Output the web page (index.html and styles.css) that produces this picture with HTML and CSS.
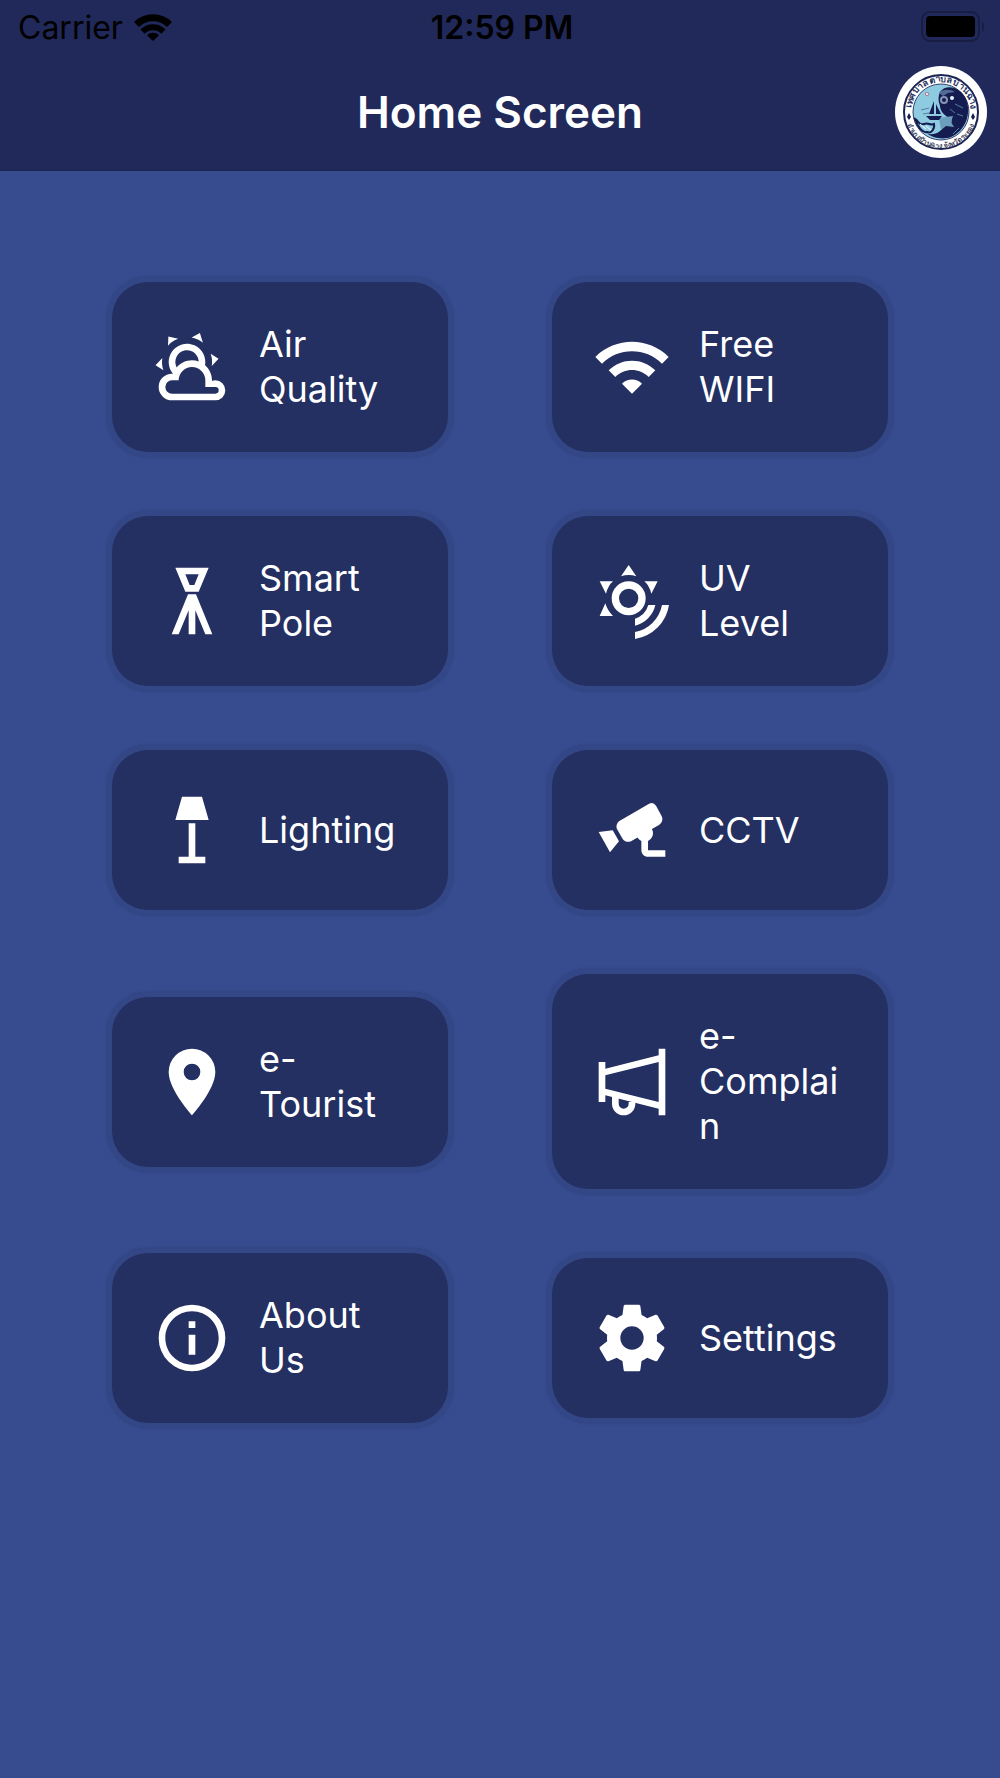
FILE: index.html
```html
<!DOCTYPE html>
<html lang="en">
<head>
  <meta charset="UTF-8" />
  <meta name="viewport" content="width=device-width, initial-scale=1" />
  <title>Home Screen</title>
  <link rel="stylesheet" href="styles.css">
</head>
<body>
  <header class="header">
    <div class="status-bar">
      <div class="carrier">
        <span>Carrier</span>
        <svg class="status-wifi" viewBox="0 0 40 30" aria-hidden="true">
          <path d="M3.5,12.5A23.5,23.5 0 0 1 36.5,12.5" fill="none" stroke="#000" stroke-width="7" />
          <path d="M9.5,19.5A15,15 0 0 1 30.5,19.5" fill="none" stroke="#000" stroke-width="6" />
          <path d="M20,29L14,23.2A8.5,8.5 0 0 1 26,23.2Z" />
        </svg>
      </div>
      <div class="clock">12:59 PM</div>
      <svg class="battery" viewBox="0 0 66 32" aria-hidden="true">
        <rect x="2" y="1" width="57" height="29" rx="8" fill="none" stroke="#171d43" stroke-width="2" />
        <rect x="6" y="5" width="49" height="21" rx="4" />
        <path d="M62,11C65,12 65,20 62,21Z" fill="#171d43" />
      </svg>
    </div>
    <div class="nav-bar">
      <h1 class="title">Home Screen</h1>
      <svg class="logo" viewBox="0 0 92 92" role="img" aria-label="Municipality seal">
        <defs>
          <path id="seal-top" d="M16,46A30,30 0 0 1 76,46" />
          <path id="seal-bottom" d="M10,46A36,36 0 0 0 82,46" />
        </defs>
        <circle cx="46" cy="46" r="46" fill="#fff" />
        <circle cx="46" cy="46" r="37" fill="#fff" stroke="#1b2352" stroke-width="2" />
        <circle cx="46" cy="46" r="28" fill="#8fcbe0" stroke="#35406f" stroke-width="1" />
        <!-- fish -->
        <path d="M45,26C52,17 66,22 71,33C77,48 70,65 56,71C48,74 38,72 33,68C42,69 47,65 49,59C54,62 58,58 56,52C50,51 45,45 45,40C43,35 43,30 45,26Z" fill="#151d50" />
        <path d="M44,52L58,50L56,56L59,61L51,60L46,64Z" fill="#6c9fbd" />
        <circle cx="49" cy="34" r="4" fill="#8795b5" />
        <circle cx="49" cy="34" r="2" fill="#151d50" />
        <circle cx="57" cy="32" r="2" fill="#e8f2f8" />
        <path d="M44,27C47,23 55,23 60,26L53,27L48,30Z" fill="#536b95" />
        <!-- boat and waves -->
        <path d="M39,35V48H34ZM41,38L46,48H41ZM31,50H47L44,54H35Z" fill="#151d50" />
        <path d="M20,53C24,55 24,60 29,58C34,56 35,60 39,58C40,63 36,68 32,66C28,67 23,62 20,53Z" fill="#8fcbe0" stroke="#151d50" stroke-width="2" />
        <path d="M25,58L31,63M31,60L36,64" stroke="#fff" stroke-width="1" />
        <path d="M26,44L34,42M28,48L34,47M58,68L64,62M60,38L68,42M62,48L68,50M55,43L60,47" stroke="#547da0" stroke-width="1" />
        <circle cx="32" cy="28" r="2" fill="#b2788c" />
        <circle cx="32" cy="28" r="1" fill="#fff" />
        <path d="M14,47L12,51L14,54L16,51ZM78,47L76,51L78,54L80,51Z" fill="#151d50" />
        <text class="seal-text"><textPath href="#seal-top" startOffset="50%">เทศบาลตำบลบ้านฉาง</textPath></text>
        <text class="seal-text seal-text-small"><textPath href="#seal-bottom" startOffset="50%">อำเภอบ้านฉาง จังหวัดระยอง</textPath></text>
      </svg>
    </div>
  </header>

  <main class="menu">
    <a class="card" href="#air-quality">
      <svg class="icon" viewBox="0 0 24 24" aria-hidden="true"><path d="M12.74,5.47C15.1,6.5 16.35,9.03 15.92,11.46C17.19,12.56 18,14.19 18,16V16.17C18.31,16.06 18.65,16 19,16A3,3 0 0,1 22,19A3,3 0 0,1 19,22H6A4,4 0 0,1 2,18A4,4 0 0,1 6,14H6.27C5,12.45 4.6,10.24 5.5,8.26C6.72,5.5 9.97,4.24 12.74,5.47M11.93,7.3C10.16,6.5 8.09,7.31 7.31,9.07C6.85,10.09 6.93,11.22 7.41,12.13C8.5,10.83 10.16,10 12,10C12.7,10 13.38,10.12 14,10.34C13.94,9.06 13.18,7.86 11.93,7.3M13.55,3.64C13,3.4 12.45,3.23 11.88,3.12L14.37,1.82L15.27,4.71C14.76,4.29 14.19,3.93 13.55,3.64M6.09,4.44C5.6,4.79 5.17,5.19 4.8,5.63L4.91,2.82L7.87,3.5C7.25,3.71 6.65,4.03 6.09,4.44M18,9.71C17.91,9.12 17.78,8.55 17.59,8L19.97,9.5L17.92,11.73C18.03,11.08 18.05,10.4 18,9.71M3.04,11.3C3.11,11.9 3.24,12.47 3.43,13L1.06,11.5L3.1,9.28C3,9.93 2.97,10.61 3.04,11.3M19,18H16V16A4,4 0 0,0 12,12A4,4 0 0,0 8,16H6A2,2 0 0,0 4,18A2,2 0 0,0 6,20H19A1,1 0 0,0 20,19A1,1 0 0,0 19,18Z" /></svg>
      <span class="label">Air Quality</span>
    </a>
    <a class="card" href="#wifi">
      <svg class="icon" viewBox="0 0 24 24" aria-hidden="true"><path d="M1 9l2 2c4.97-4.97 13.03-4.97 18 0l2-2C16.93 2.93 7.08 2.93 1 9zm8 8l3 3 3-3c-1.65-1.66-4.34-1.66-6 0zm-4-4l2 2c2.76-2.76 7.24-2.76 10 0l2-2C15.14 9.14 8.87 9.14 5 13z" /></svg>
      <span class="label">Free WIFI</span>
    </a>
    <a class="card" href="#smart-pole">
      <svg class="icon" viewBox="0 0 24 24" aria-hidden="true"><path fill-rule="evenodd" d="M7,2H17L14,9.2H10L7,2M10,4L11.3,7.2H12.7L14,4H10M10.8,10H13.2L18.1,22H16L13,14.8V22H11V14.8L8,22H5.9L10.8,10Z" /></svg>
      <span class="label">Smart Pole</span>
    </a>
    <a class="card" href="#uv">
      <svg class="icon" viewBox="0 0 24 24" aria-hidden="true">
        <circle cx="11" cy="11.2" r="4" fill="none" stroke="#fff" stroke-width="2.2" />
        <path d="M11,1.2L13.3,4.6Q11,3.8 8.7,4.6ZM2.3,6.1H6.3Q4.8,7.4 4.2,9.8ZM15.7,6.1H19.7L17.8,9.8Q17.2,7.4 15.7,6.1ZM2.3,16.5L4,12.7Q4.7,15 6.3,16.5ZM16.9,13.2H19A8.2,8.2 0 0 1 12.9,19.4V17.3A6.2,6.2 0 0 0 16.9,13.2ZM21,13.2H23.1A12.2,12.2 0 0 1 12.9,23.4V21.3A10.2,10.2 0 0 0 21,13.2Z" />
      </svg>
      <span class="label">UV Level</span>
    </a>
    <a class="card" href="#lighting">
      <svg class="icon" viewBox="0 0 24 24" aria-hidden="true"><path d="M9,2H15L17,9H7L9,2M11,10H13V20H16V22H8V20H11V10Z" /></svg>
      <span class="label">Lighting</span>
    </a>
    <a class="card" href="#cctv">
      <svg class="icon" viewBox="0 0 24 24" aria-hidden="true"><path d="M18.15,3.94C17.77,3.91 17.37,4 17,4.2L8.35,9.2C7.39,9.76 7.07,11 7.62,11.94L9.12,14.53C9.67,15.5 10.89,15.82 11.85,15.27L13.65,14.23C13.92,14.69 14.32,15.06 14.81,15.27V18.04C14.81,19.13 15.7,20 16.81,20H22V18.04H16.81V15.27C17.72,14.87 18.31,13.97 18.31,13C18.31,12.54 18.19,12.11 17.97,11.73L20.1,10.47C21.07,9.91 21.4,8.7 20.84,7.73L19.34,4.94C19,4.34 18.6,4 18.15,3.94M6.22,12.1L2,12.6L5.4,18.7L8.1,15.4L6.22,12.1Z" /></svg>
      <span class="label">CCTV</span>
    </a>
    <a class="card" href="#tourist">
      <svg class="icon" viewBox="0 0 24 24" aria-hidden="true"><path d="M12,11.5A2.5,2.5 0 0,1 9.5,9A2.5,2.5 0 0,1 12,6.5A2.5,2.5 0 0,1 14.5,9A2.5,2.5 0 0,1 12,11.5M12,2A7,7 0 0,0 5,9C5,14.25 12,22 12,22C12,22 19,14.25 19,9A7,7 0 0,0 12,2Z" /></svg>
      <span class="label">e-Tourist</span>
    </a>
    <a class="card" href="#complain">
      <svg class="icon" viewBox="0 0 24 24" aria-hidden="true">
        <path fill-rule="evenodd" d="M2,6H4V8L20,4V2H22V22H20V20L4,16V18H2ZM20,6L4,10V14L20,18Z" />
        <path d="M7,16.5V18.5A2.5,2.5 0 0 0 12,18.5V18" fill="none" stroke="#fff" stroke-width="2" />
      </svg>
      <span class="label">e-Complain</span>
    </a>
    <a class="card" href="#about">
      <svg class="icon" viewBox="0 0 24 24" aria-hidden="true"><path d="M11,9H13V7H11M12,20C7.59,20 4,16.41 4,12C4,7.59 7.59,4 12,4C16.41,4 20,7.59 20,12C20,16.41 16.41,20 12,20M12,2A10,10 0 0,0 2,12A10,10 0 0,0 12,22A10,10 0 0,0 22,12A10,10 0 0,0 12,2M11,17H13V11H11V17Z" /></svg>
      <span class="label">About Us</span>
    </a>
    <a class="card" href="#settings">
      <svg class="icon" viewBox="0 0 24 24" aria-hidden="true"><path d="M12,15.5A3.5,3.5 0 0,1 8.5,12A3.5,3.5 0 0,1 12,8.5A3.5,3.5 0 0,1 15.5,12A3.5,3.5 0 0,1 12,15.5M19.43,12.97C19.47,12.65 19.5,12.33 19.5,12C19.5,11.67 19.47,11.34 19.43,11L21.54,9.37C21.73,9.22 21.78,8.95 21.66,8.73L19.66,5.27C19.54,5.05 19.27,4.96 19.05,5.05L16.56,6.05C16.04,5.66 15.5,5.32 14.87,5.07L14.5,2.42C14.46,2.18 14.25,2 14,2H10C9.75,2 9.54,2.18 9.5,2.42L9.13,5.07C8.5,5.32 7.96,5.66 7.44,6.05L4.95,5.05C4.73,4.96 4.46,5.05 4.34,5.27L2.34,8.73C2.21,8.95 2.27,9.22 2.46,9.37L4.57,11C4.53,11.34 4.5,11.67 4.5,12C4.5,12.33 4.53,12.65 4.57,12.97L2.46,14.63C2.27,14.78 2.21,15.05 2.34,15.27L4.34,18.73C4.46,18.95 4.73,19.03 4.95,18.95L7.44,17.94C7.96,18.34 8.5,18.68 9.13,18.93L9.5,21.58C9.54,21.82 9.75,22 10,22H14C14.25,22 14.46,21.82 14.5,21.58L14.87,18.93C15.5,18.67 16.04,18.34 16.56,17.94L19.05,18.95C19.27,19.03 19.54,18.95 19.66,18.73L21.66,15.27C21.78,15.05 21.73,14.78 21.54,14.63L19.43,12.97Z" /></svg>
      <span class="label">Settings</span>
    </a>
  </main>
</body>
</html>
```
FILE: styles.css
```css
* {
  box-sizing: border-box;
}
body {
  margin: 0;
  min-height: 100vh;
  background: #374b8f;
  font-family: Inter, "Liberation Sans", sans-serif;
}
.header {
  background: #20295a;
  border-bottom: 1px solid #1c2550;
}
.status-bar,
.nav-bar {
  display: grid;
  grid-template-columns: 1fr auto 1fr;
  align-items: center;
}
.status-bar {
  height: 54px;
  padding: 0 14px 0 18px;
  color: #000;
  font-size: 32px;
}
.carrier {
  display: flex;
  align-items: center;
  gap: 10px;
}
.status-wifi {
  width: 40px;
  height: 30px;
}
.clock {
  font-weight: 600;
}
.battery {
  width: 66px;
  height: 32px;
  justify-self: end;
}
.nav-bar {
  height: 116px;
  padding: 0 13px;
}
.title {
  grid-column: 2;
  margin: 0;
  color: #fff;
  font-size: 44px;
  font-weight: 600;
}
.logo {
  width: 92px;
  height: 92px;
  justify-self: end;
}
.seal-text {
  fill: #2a3160;
  font-size: 9px;
  font-weight: 700;
  text-anchor: middle;
}
.seal-text-small {
  fill: #44485f;
  font-size: 7px;
}
.menu {
  display: grid;
  grid-template-columns: 1fr 1fr;
  align-items: center;
  gap: 64px 104px;
  padding: 111px 112px;
}
.card {
  display: flex;
  align-items: center;
  gap: 27px;
  padding: 40px 44px 40px 40px;
  border-radius: 36px;
  background: #242f62;
  box-shadow: 0 0 0 5px #334685, 0 0 2px 6px #324583;
  color: #fff;
  text-decoration: none;
}
.icon {
  flex: none;
  width: 80px;
  height: 80px;
  fill: #fff;
}
.label {
  flex: 1;
  min-width: 0;
  font-size: 36px;
  line-height: 45px;
  overflow-wrap: anywhere;
}
```
